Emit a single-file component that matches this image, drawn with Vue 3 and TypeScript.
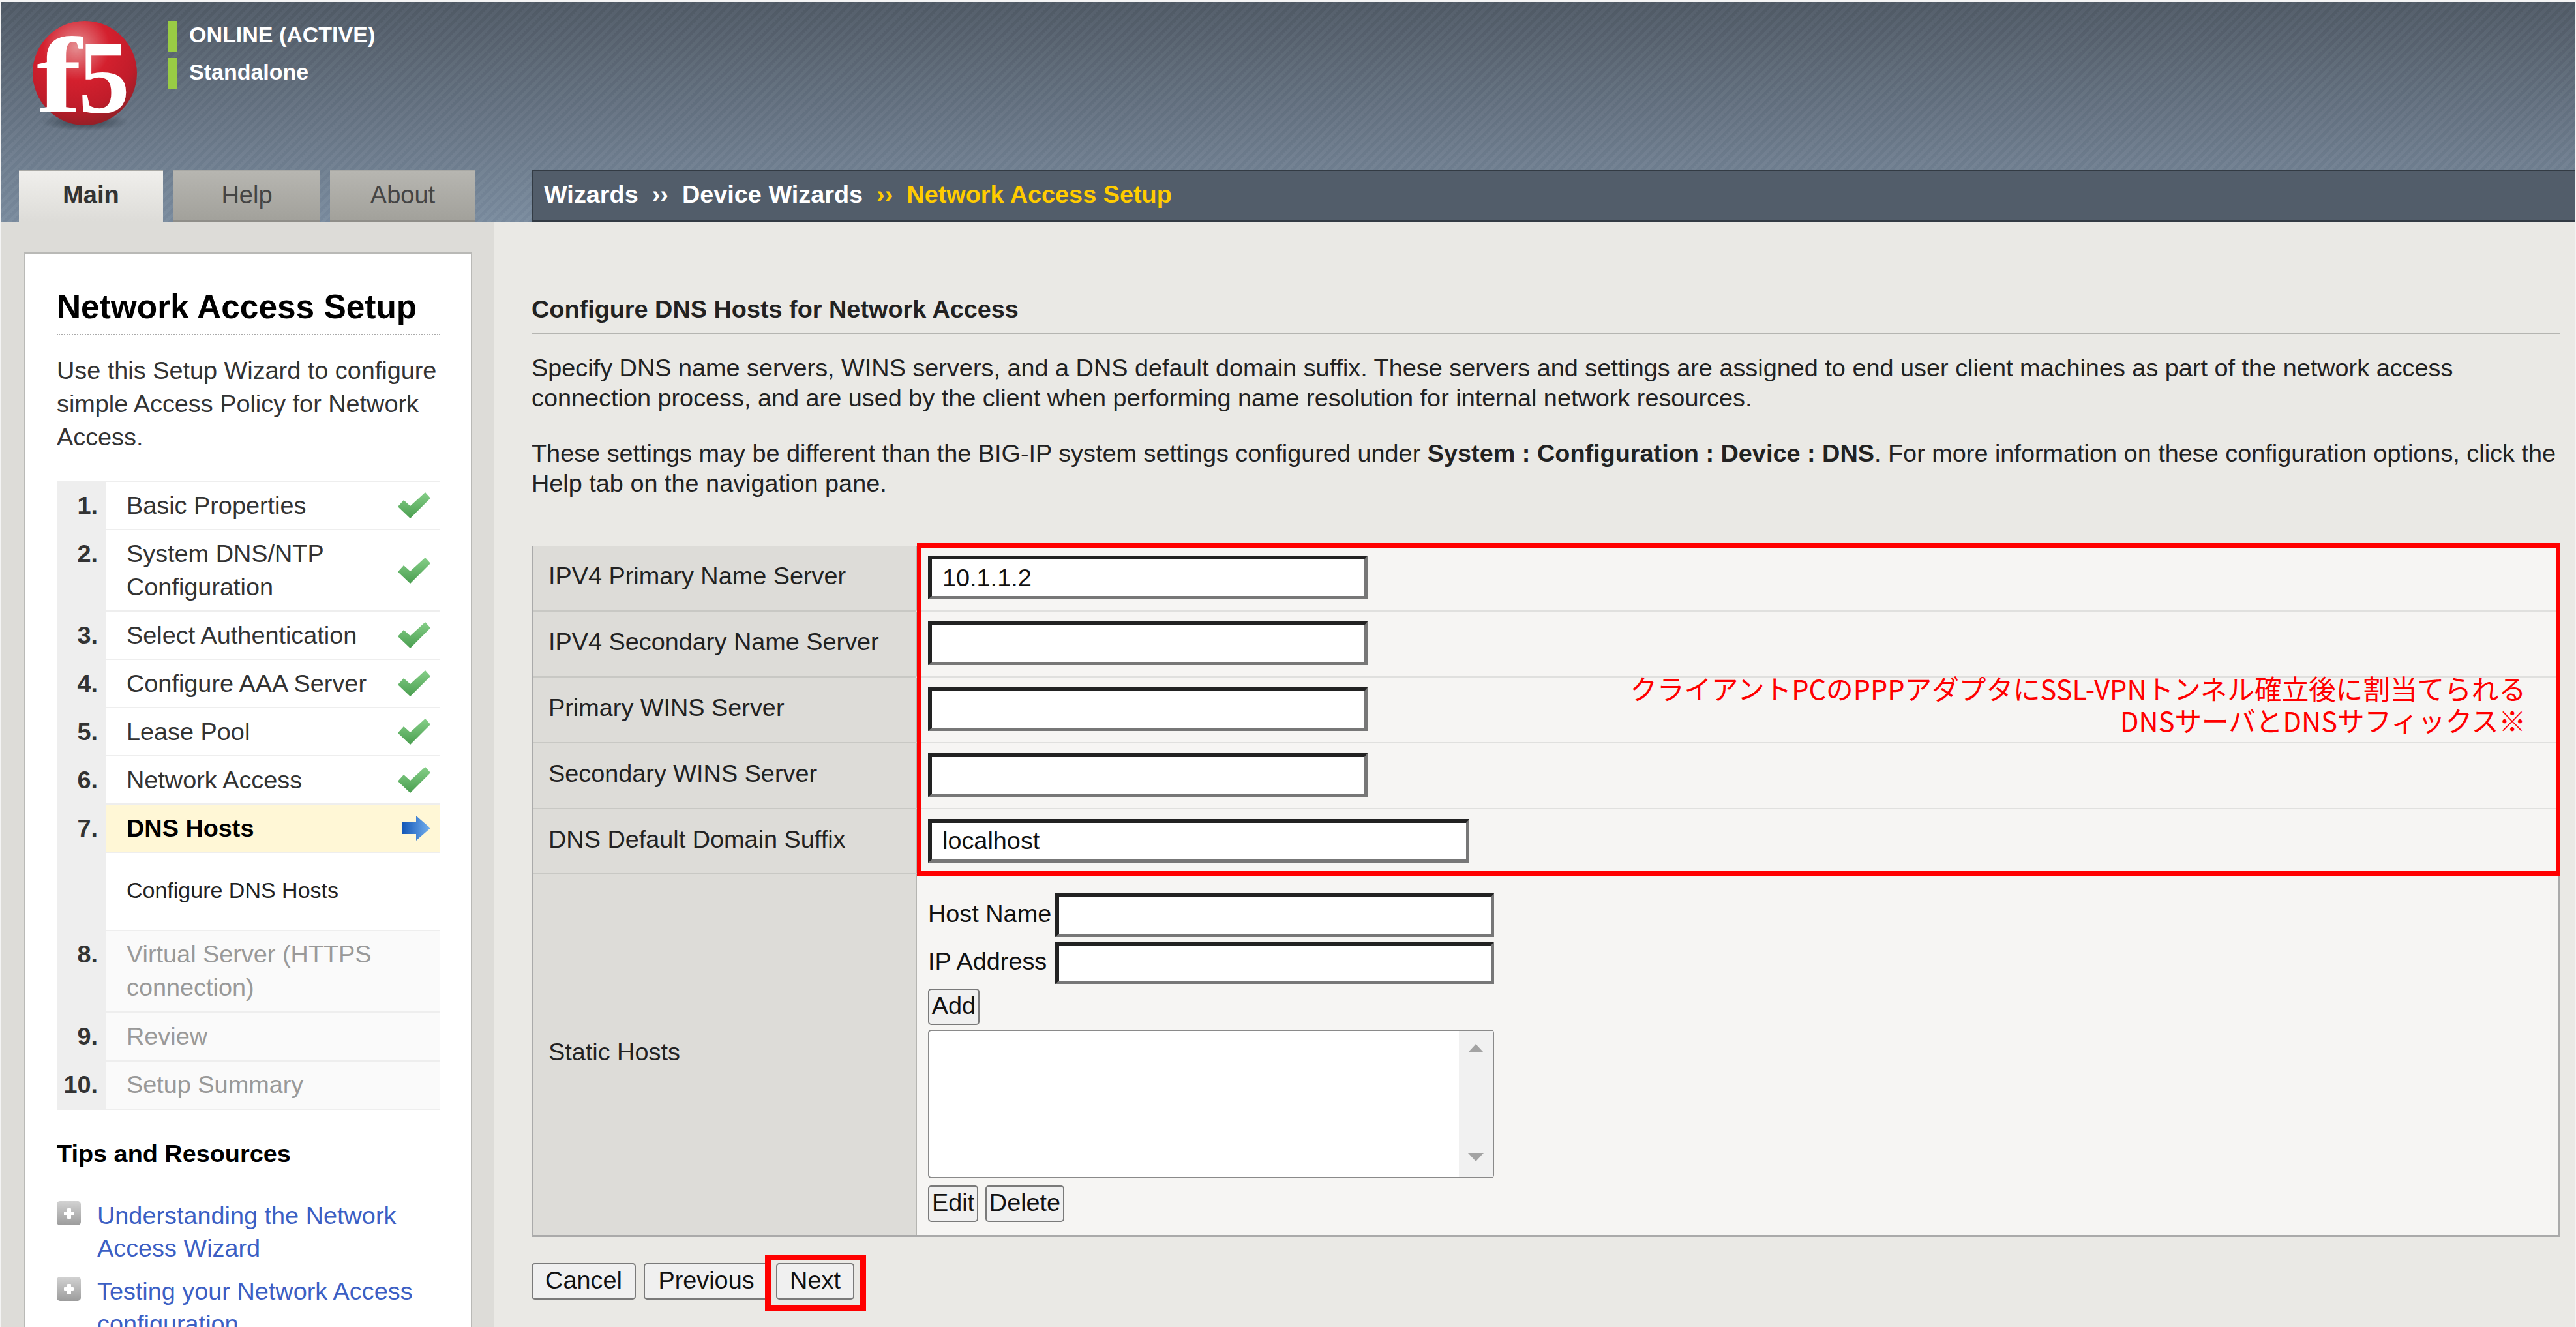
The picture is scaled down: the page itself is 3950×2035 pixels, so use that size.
<script setup lang="ts">
interface Step {
  num: string;
  label: string[];
  state: "done" | "current" | "todo";
}

const steps: Step[] = [
  { num: "1.", label: ["Basic Properties"], state: "done" },
  { num: "2.", label: ["System DNS/NTP", "Configuration"], state: "done" },
  { num: "3.", label: ["Select Authentication"], state: "done" },
  { num: "4.", label: ["Configure AAA Server"], state: "done" },
  { num: "5.", label: ["Lease Pool"], state: "done" },
  { num: "6.", label: ["Network Access"], state: "done" },
  { num: "7.", label: ["DNS Hosts"], state: "current" },
  { num: "8.", label: ["Virtual Server (HTTPS", "connection)"], state: "todo" },
  { num: "9.", label: ["Review"], state: "todo" },
  { num: "10.", label: ["Setup Summary"], state: "todo" },
];

const tips: string[][] = [
  ["Understanding the Network", "Access Wizard"],
  ["Testing your Network Access", "configuration"],
];

const fields = [
  { label: "IPV4 Primary Name Server", value: "10.1.1.2", wide: false },
  { label: "IPV4 Secondary Name Server", value: "", wide: false },
  { label: "Primary WINS Server", value: "", wide: false },
  { label: "Secondary WINS Server", value: "", wide: false },
  { label: "DNS Default Domain Suffix", value: "localhost", wide: true },
];
</script>

<template>
  <div class="page">
    <header class="top">
      <div class="top-row">
        <svg class="logo" width="180" height="180" viewBox="0 0 180 180">
          <defs>
            <radialGradient id="ball" cx="0.42" cy="0.25" r="0.8">
              <stop offset="0" stop-color="#e58f92" />
              <stop offset="0.4" stop-color="#d4202e" />
              <stop offset="0.72" stop-color="#c01c2a" />
              <stop offset="1" stop-color="#8a2026" />
            </radialGradient>
            <radialGradient id="shade" cx="0.5" cy="0.5" r="0.5">
              <stop offset="0" stop-color="#222c36" stop-opacity="0.7" />
              <stop offset="1" stop-color="#222c36" stop-opacity="0" />
            </radialGradient>
          </defs>
          <ellipse cx="90" cy="162" rx="68" ry="14" fill="url(#shade)" />
          <circle cx="90" cy="87" r="80" fill="url(#ball)" />
          <text class="logo-text" transform="translate(16 147) scale(1.25 1)" font-size="166">f</text>
          <text class="logo-text" x="80" y="147" font-size="158">5</text>
        </svg>
        <div class="status">
          <div class="status-item"><span>ONLINE (ACTIVE)</span></div>
          <div class="status-item"><span>Standalone</span></div>
        </div>
      </div>
      <nav class="nav-row">
        <div class="tab tab-on">Main</div>
        <div class="tab tab-help">Help</div>
        <div class="tab tab-about">About</div>
        <div class="crumbs">
          <span>Wizards</span>
          <span class="sep">››</span>
          <span>Device Wizards</span>
          <span class="sep sep-last">››</span>
          <span class="crumb-last">Network Access Setup</span>
        </div>
      </nav>
    </header>

    <div class="content">
      <aside class="side">
        <div class="panel">
          <h1 class="panel-title">Network Access Setup</h1>
          <p class="panel-desc">Use this Setup Wizard to configure simple Access Policy for Network Access.</p>

          <ol class="steps">
            <template v-for="s in steps" :key="s.num">
              <li class="step" :class="s.state">
                <div class="step-num">{{ s.num }}</div>
                <div class="step-body">
                  <div class="step-label">
                    <div v-for="l in s.label" :key="l">{{ l }}</div>
                  </div>
                  <svg v-if="s.state === 'done'" class="ico-check" width="50" height="40" viewBox="0 0 50 40">
                    <defs>
                      <linearGradient id="chk" x1="0" y1="0" x2="0" y2="1">
                        <stop offset="0" stop-color="#86cf88" />
                        <stop offset="1" stop-color="#4a9e50" />
                      </linearGradient>
                    </defs>
                    <polygon points="0,22 9,12 19,21 42,0 50,9 19,40" fill="url(#chk)" />
                  </svg>
                  <svg v-if="s.state === 'current'" class="ico-arrow" width="43" height="38" viewBox="0 0 43 38">
                    <defs>
                      <linearGradient id="arw" x1="0" y1="0" x2="1" y2="0">
                        <stop offset="0" stop-color="#1458b8" />
                        <stop offset="1" stop-color="#74b0ee" />
                      </linearGradient>
                    </defs>
                    <polygon points="0,10 21,10 21,0 43,19 21,38 21,28 0,28" fill="url(#arw)" />
                  </svg>
                </div>
              </li>
              <li v-if="s.state === 'current'" class="step substep">
                <div class="step-num"></div>
                <div class="step-body">Configure DNS Hosts</div>
              </li>
            </template>
          </ol>

          <h2 class="tips-title">Tips and Resources</h2>
          <ul class="tips">
            <li v-for="t in tips" :key="t[0]" class="tip">
              <span class="plus"></span>
              <a class="tip-link">
                <div v-for="l in t" :key="l">{{ l }}</div>
              </a>
            </li>
          </ul>
        </div>
      </aside>

      <main class="main">
        <h2 class="main-title">Configure DNS Hosts for Network Access</h2>
        <p class="para first">Specify DNS name servers, WINS servers, and a DNS default domain suffix. These servers and settings are assigned to end user client machines as part of the network access<br />connection process, and are used by the client when performing name resolution for internal network resources.</p>
        <p class="para">These settings may be different than the BIG-IP system settings configured under <b>System : Configuration : Device : DNS</b>. For more information on these configuration options, click the<br />Help tab on the navigation pane.</p>

        <div class="form">
          <div v-for="f in fields" :key="f.label" class="row">
            <div class="row-label">{{ f.label }}</div>
            <div class="row-value">
              <input class="field" :class="{ wide: f.wide }" type="text" :value="f.value" />
            </div>
          </div>
          <div class="row row-static">
            <div class="row-label">Static Hosts</div>
            <div class="row-value static">
              <div class="static-line">
                <label class="static-label">Host Name</label>
                <input class="field field-short" type="text" />
              </div>
              <div class="static-line">
                <label class="static-label">IP Address</label>
                <input class="field field-short ip" type="text" />
              </div>
              <button class="btn btn-add">Add</button>
              <div class="listbox">
                <div class="scroll">
                  <span class="tri tri-up"></span>
                  <span class="tri tri-down"></span>
                </div>
              </div>
              <div class="static-btns">
                <button class="btn btn-edit">Edit</button>
                <button class="btn btn-del">Delete</button>
              </div>
            </div>
          </div>

          <!-- 注記の赤枠 -->
          <div class="mark-box"></div>
          <div class="mark-text">
            <div>クライアントPCのPPPアダプタにSSL-VPNトンネル確立後に割当てられる</div>
            <div>DNSサーバとDNSサフィックス※</div>
          </div>
        </div>

        <div class="actions">
          <button class="btn btn-cancel">Cancel</button>
          <button class="btn btn-prev">Previous</button>
          <button class="btn btn-next">Next</button>
          <div class="mark-next"></div>
        </div>
      </main>
    </div>
  </div>
</template>

<style>
html,
body {
  margin: 0;
  overflow: hidden;
  background: #fff;
}
</style>

<style scoped>
.page {
  width: 3950px;
  height: 2035px;
  box-sizing: border-box;
  padding: 3px 1px 0 1.5px;
  overflow: hidden;
  background: #f4f4f4;
  display: flex;
  flex-direction: column;
  font-family: "Liberation Sans", Arial, sans-serif;
  font-size: 37.85px;
  color: #222;
}

/* header */
.top {
  background:
    repeating-linear-gradient(-45deg, rgba(255, 255, 255, 0.03) 0 5px, rgba(0, 0, 0, 0.015) 5px 10px),
    linear-gradient(to bottom, #505a66, #7a8b9e);
}
.top-row {
  height: 257px;
  box-sizing: border-box;
  padding: 22px 0 0 38.5px;
  display: flex;
  align-items: flex-start;
}
.logo {
  flex: none;
}
.logo-text {
  font-family: "Liberation Serif", serif;
  font-weight: bold;
  fill: #fff;
}
.status {
  margin: 7px 0 0 38px;
  display: flex;
  flex-direction: column;
  gap: 10px;
}
.status-item {
  height: 47px;
  border-left: 14px solid #9c4;
  padding-left: 18px;
  color: #fff;
  font-size: 34px;
  font-weight: bold;
  line-height: 42px;
}
.nav-row {
  height: 80px;
  display: flex;
  padding-left: 27.5px;
}
.tab {
  width: 223px;
  box-sizing: border-box;
  text-align: center;
  line-height: 74px;
  font-size: 38px;
  color: #444;
  background: linear-gradient(to bottom, #b7b6b1, #a2a19b);
  border-top: 2px solid #a9a9a5;
  border-bottom: 2px solid #8f8e89;
  margin-right: 15px;
}
.tab-on {
  width: 221px;
  margin-right: 16px;
  font-weight: bold;
  color: #333;
  background: linear-gradient(to bottom, #f0efec, #dddcd8);
  border-bottom: 0;
}
.tab-help {
  width: 225px;
}
.tab-about {
  margin-right: 86px;
}
.crumbs {
  flex: 1;
  display: flex;
  align-items: center;
  box-sizing: border-box;
  padding: 0 0 4px 17px;
  background: #525d6a;
  border: solid #333b44;
  border-width: 2px 0 2px 2px;
  color: #fff;
  font-size: 37.85px;
  font-weight: bold;
}
.sep {
  margin: 0 21px;
}
.sep-last,
.crumb-last {
  color: #fc0;
}

/* layout */
.content {
  flex: 1;
  min-height: 0;
  display: flex;
}
.side {
  width: 756.5px;
  flex: none;
  box-sizing: border-box;
  padding: 47px 34px 0 35.5px;
  background: #dddcd8;
}
.panel {
  height: 100%;
  box-sizing: border-box;
  background: #fff;
  border: 2px solid #b9b9b6;
  border-bottom: 0;
  padding: 0 47px 0 48px;
}
.panel-title {
  margin: 0;
  padding: 52px 0 13px;
  font-size: 51.4px;
  line-height: 58px;
  color: #000;
  border-bottom: 2px dotted #aaa;
}
.panel-desc {
  margin: 29px 0 43px;
  line-height: 51px;
  color: #333;
}

/* steps */
.steps {
  list-style: none;
  margin: 0;
  padding: 0;
  box-shadow: 0 -2px 0 #eee;
}
.step {
  display: flex;
}
.step-num {
  width: 76px;
  flex: none;
  box-sizing: border-box;
  padding: 10.5px 13px 0 0;
  background: #eee;
  text-align: right;
  font-weight: bold;
  line-height: 51px;
  color: #333;
}
.step-body {
  flex: 1;
  display: flex;
  align-items: center;
  justify-content: space-between;
  padding: 10.5px 15px 10.5px 31px;
  line-height: 51px;
  border-bottom: 2px solid #eee;
  color: #333;
}
.current .step-body {
  background: #fff7d6;
  font-weight: bold;
  color: #000;
}
.todo .step-body {
  padding-top: 10.8px;
  padding-bottom: 10.8px;
  background: #fafafa;
  color: #999;
}
.substep .step-body {
  height: 119.5px;
  box-sizing: border-box;
  font-size: 34px;
  padding-bottom: 14px;
  color: #222;
}
.ico-check {
  flex: none;
  filter: blur(0.6px);
}
.ico-arrow {
  flex: none;
  filter: blur(0.5px);
}

/* tips */
.tips-title {
  margin: 0;
  padding-top: 45px;
  font-size: 37.85px;
  line-height: 44px;
  color: #000;
}
.tips {
  list-style: none;
  margin: 48px 0 0;
  padding: 0;
}
.tip {
  display: flex;
  gap: 25px;
  margin-bottom: 16px;
  line-height: 50px;
}
.plus {
  position: relative;
  flex: none;
  width: 37px;
  height: 37px;
  border-radius: 5px;
  margin-top: 3px;
  background: linear-gradient(to bottom, #d2d2d2, #9c9c9c);
}
.plus::before,
.plus::after {
  content: "";
  position: absolute;
  background: #fff;
  border-radius: 1px;
}
.plus::before {
  left: 11px;
  right: 11px;
  top: 16px;
  height: 6px;
}
.plus::after {
  top: 11px;
  bottom: 10px;
  left: 16px;
  width: 6px;
}
.tip-link {
  color: #3c5fc4;
}

/* main */
.main {
  flex: 1;
  min-width: 0;
  padding: 0 24px 0 57px;
  background: #eae9e5;
}
.main-title {
  margin: 0;
  padding: 112px 0 14px;
  font-size: 37.85px;
  line-height: 44px;
  color: #222;
  border-bottom: 2px solid #b5b5b1;
}
.para {
  margin: 39px 0 0;
  line-height: 46px;
  color: #222;
  white-space: nowrap;
}
.para.first {
  margin-top: 29px;
}

/* form */
.form {
  position: relative;
  margin-top: 73px;
  border: solid #aaa;
  border-width: 0 2px 3px;
}
.row {
  display: flex;
}
.row-label {
  width: 587px;
  flex: none;
  box-sizing: border-box;
  height: 100.9px;
  padding: 0 0 6px 24px;
  display: flex;
  align-items: center;
  background: #dddcd8;
  border-bottom: 2px solid #c8c8c4;
}
.row-value {
  flex: 1;
  height: 100.9px;
  box-sizing: border-box;
  padding: 15px 0 0 17px;
  background: #f6f5f3;
  border-left: 2px solid #b5b5b1;
  border-bottom: 2px solid #e0e0de;
}
.row-static .row-label {
  height: 553px;
  padding-bottom: 8px;
  border-bottom: 0;
}
.row-value.static {
  height: 553px;
  padding-top: 29px;
  border-bottom: 0;
}
.field {
  display: block;
  width: 674px;
  height: 67px;
  box-sizing: border-box;
  padding: 0 16px;
  margin: 0;
  font: 37.85px "Liberation Sans", Arial, sans-serif;
  color: #111;
  background: #fff;
  outline: 0;
  border-style: solid;
  border-width: 6px 5px 5px 6px;
  border-color: #222 #777 #777 #222;
}
.field.wide {
  width: 830px;
}
.field-short {
  width: 673px;
}
.field-short.ip {
  height: 65px;
}
.static-line {
  display: flex;
  align-items: center;
  margin-bottom: 7px;
}
.static-label {
  width: 195px;
  flex: none;
  color: #111;
  padding-bottom: 4px;
}
.btn {
  height: 56px;
  box-sizing: border-box;
  padding: 0 0 3px;
  font: 37.85px "Liberation Sans", Arial, sans-serif;
  color: #111;
  background: #f0f0f0;
  border: 2.5px solid #7a7a7a;
  border-radius: 5px;
  display: block;
}
.btn-add {
  width: 79px;
}
.listbox {
  width: 868px;
  height: 228px;
  box-sizing: border-box;
  margin: 7px 0 11px;
  display: flex;
  justify-content: flex-end;
  background: #fff;
  border: 2.5px solid #8a8a8a;
  border-radius: 5px;
}
.scroll {
  position: relative;
  width: 52px;
  background: #f1f1f1;
}
.tri {
  position: absolute;
  left: 14px;
  width: 0;
  height: 0;
  border-left: 12px solid transparent;
  border-right: 12px solid transparent;
}
.tri-up {
  top: 20px;
  border-bottom: 13px solid #a3a3a3;
}
.tri-down {
  bottom: 24px;
  border-top: 13px solid #a3a3a3;
}
.static-btns {
  display: flex;
  gap: 11px;
}
.btn-edit {
  width: 77px;
}
.btn-del {
  width: 121px;
}
.actions {
  position: relative;
  display: flex;
  margin-top: 40px;
}
.btn-cancel {
  width: 160px;
  margin-right: 12px;
}
.btn-prev {
  width: 192px;
  margin-right: 11px;
}
.btn-next {
  width: 120px;
}

/* annotations */
.mark-box {
  position: absolute;
  left: 589px;
  right: -2px;
  top: -4px;
  height: 510px;
  box-sizing: border-box;
  border: solid #f00;
  border-width: 7px 6px 7px 7px;
}
.mark-text {
  position: absolute;
  top: 194px;
  right: 50px;
  text-align: right;
  color: #f00;
  font-family: "Noto Sans CJK JP", sans-serif;
  font-size: 41.6px;
  line-height: 49px;
  white-space: nowrap;
}
.mark-next {
  position: absolute;
  left: 358px;
  top: -13px;
  width: 155px;
  height: 86px;
  box-sizing: border-box;
  border: solid #f00;
  border-width: 8px 10px;
}
</style>
